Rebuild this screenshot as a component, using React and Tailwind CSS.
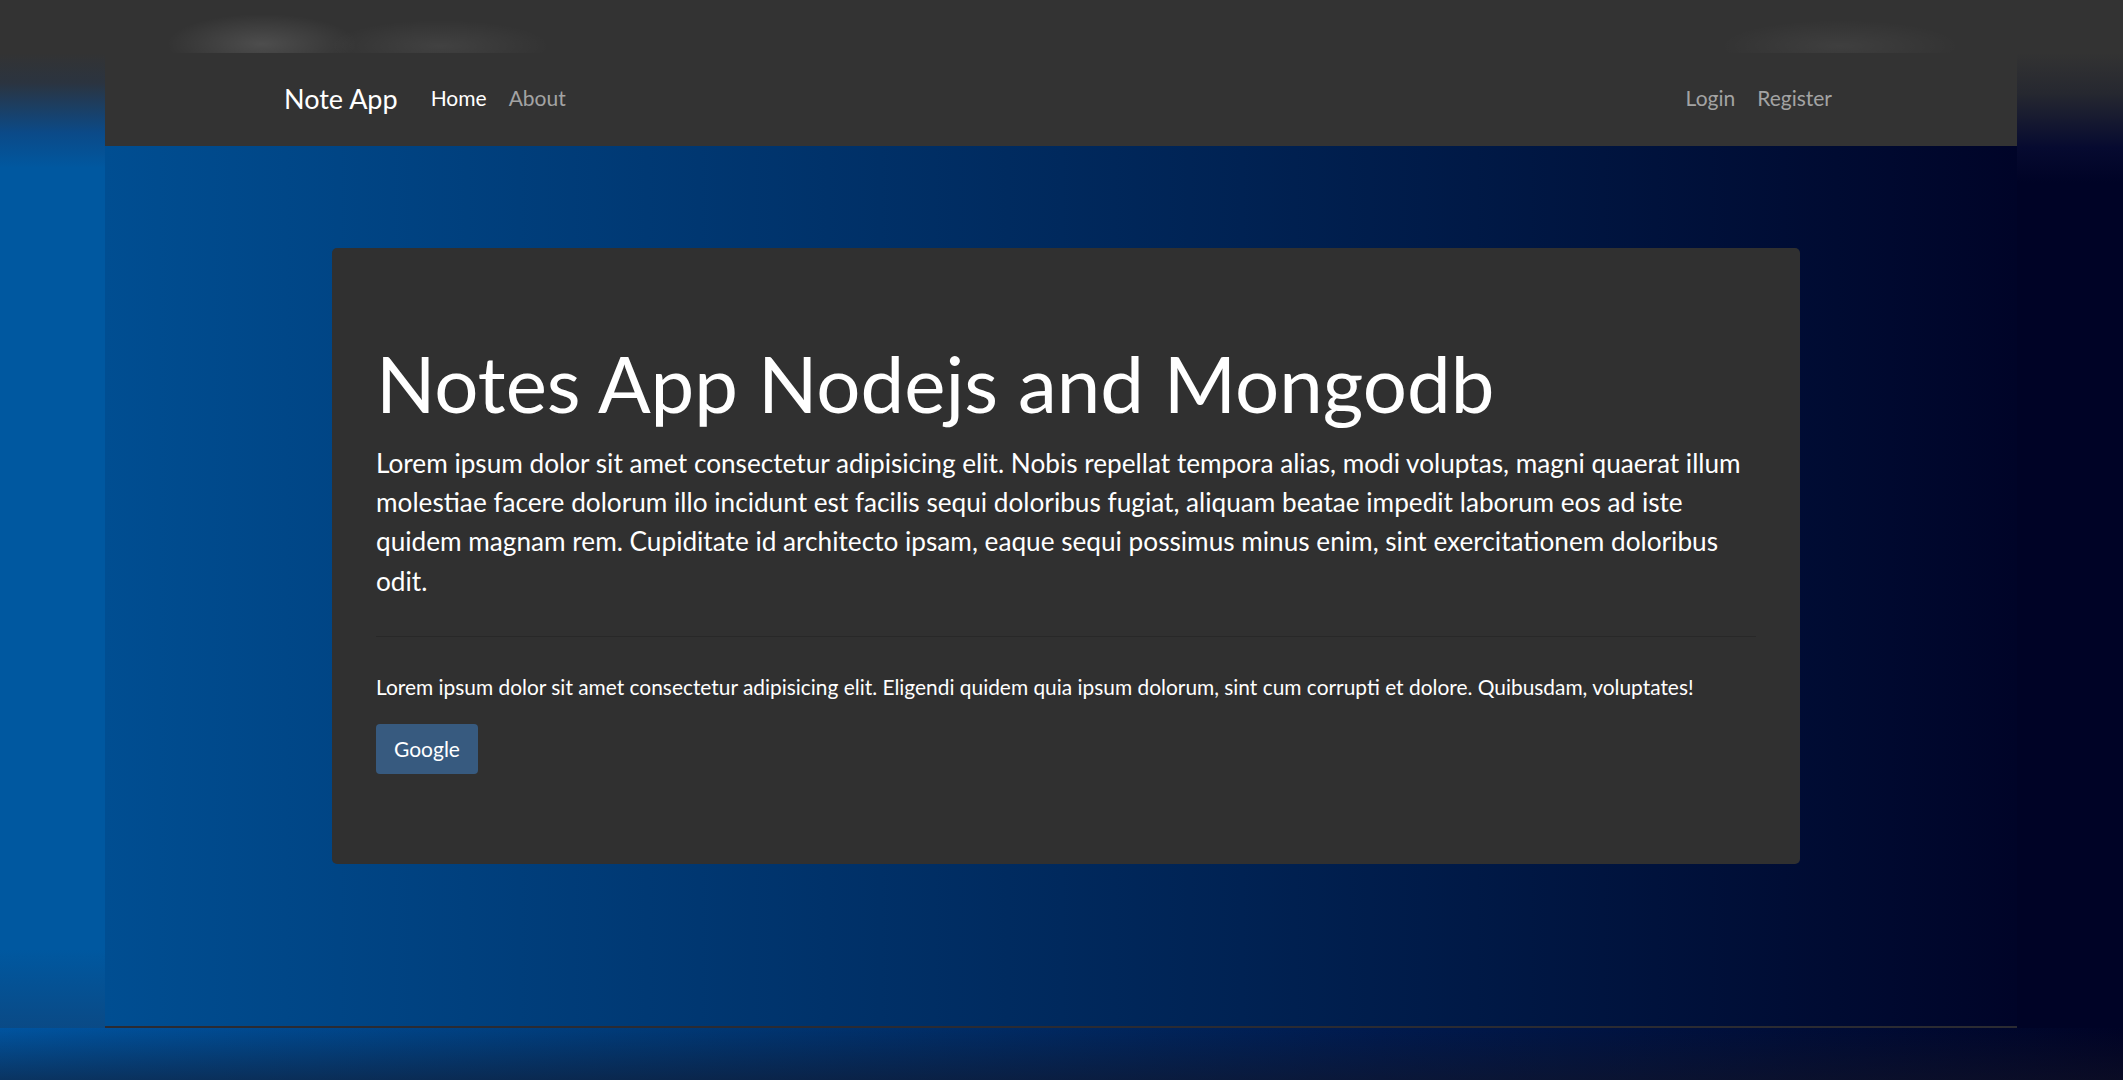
import React from 'react';

const links = ['Home', 'About'];

function Navbar() {
  return (
    <nav className="h-[93px] bg-[#333333] flex items-center pb-[3px]">
      <div className="w-full px-[179px] flex items-center justify-between">
        <div className="flex items-center">
          <a href="#" className="text-[27px] text-white mr-[22px] leading-none">Note App</a>
          <ul className="flex items-center">
            {links.map((l, i) => (
              <li key={l}>
                <a href="#" className={`block px-[11px] text-[21px] ${i === 0 ? 'text-white' : 'text-[#a3a3a3]'}`}>
                  {l}
                </a>
              </li>
            ))}
          </ul>
        </div>
        <ul className="flex items-center">
          <li><a href="#" className="block px-[11px] text-[21px] text-[#a3a3a3]">Login</a></li>
          <li><a href="#" className="block pl-[11px] pr-[6px] text-[21px] text-[#a3a3a3]">Register</a></li>
        </ul>
      </div>
    </nav>
  );
}

function Jumbotron() {
  return (
    <div className="ml-[227px] w-[1468px] bg-[#303030] rounded-[5px] px-[44px] pt-[89px] pb-[90px] text-white">
      <h1 className="text-[78px] leading-[1.2] font-normal mb-[13px]">Notes App Nodejs and Mongodb</h1>
      <p className="text-[26.2px] leading-[39.4px]">
        Lorem ipsum dolor sit amet consectetur adipisicing elit. Nobis repellat tempora alias, modi voluptas, magni quaerat illum molestiae facere dolorum illo incidunt est facilis sequi doloribus fugiat, aliquam beatae impedit laborum eos ad iste quidem magnam rem. Cupiditate id architecto ipsam, eaque sequi possimus minus enim, sint exercitationem doloribus odit.
      </p>
      <hr className="mt-[35px] border-0 border-t border-black/15" />
      <p className="mt-[34px] text-[20.9px] leading-[32.5px]">
        Lorem ipsum dolor sit amet consectetur adipisicing elit. Eligendi quidem quia ipsum dolorum, sint cum corrupti et dolore. Quibusdam, voluptates!
      </p>
      <a href="#" className="mt-[20px] inline-flex items-center h-[50px] px-[18px] bg-[#375a7f] rounded-[4px] text-[21px] text-white">
        Google
      </a>
    </div>
  );
}

export default function App() {
  return (
    <div className="w-[2123px] h-[1080px] overflow-hidden flex flex-col bg-[#333333] font-['Lato','Noto_Sans',sans-serif]">
      {/* blurred frame, top */}
      <div className="h-[53px] shrink-0 bg-[#333333] bg-[radial-gradient(ellipse_95px_30px_at_262px_44px,rgba(255,255,255,0.13),transparent),radial-gradient(ellipse_110px_26px_at_440px_46px,rgba(255,255,255,0.07),transparent),radial-gradient(ellipse_120px_26px_at_1840px_46px,rgba(255,255,255,0.06),transparent)]" />

      <div className="flex h-[975px] shrink-0">
        <div className="w-[105px] shrink-0 bg-[linear-gradient(to_bottom,#333333_0px,#2b3440_30px,#0b4a88_80px,#0058a0_115px,#0058a0_92%,#0a4a86_100%)]" />

        <div className="w-[1912px] shrink-0 flex flex-col">
          <Navbar />
          <main className="flex-1 bg-[linear-gradient(to_right,#004e92,#000428)] pt-[102px]">
            <Jumbotron />
          </main>
          <div className="h-[2px] bg-[rgba(40,40,50,0.65)]" />
        </div>

        <div className="w-[106px] shrink-0 bg-[linear-gradient(to_bottom,#333333_0px,#262830_40px,#060a30_95px,#000326_130px,#000326_100%)]" />
      </div>

      {/* blurred frame, bottom */}
      <div className="flex-1 bg-[linear-gradient(to_bottom,rgba(20,20,30,0)_0%,rgba(20,20,35,0.5)_100%),linear-gradient(to_right,#0054a0,#003a78_30%,#001a4e_65%,#000326)]" />
    </div>
  );
}
